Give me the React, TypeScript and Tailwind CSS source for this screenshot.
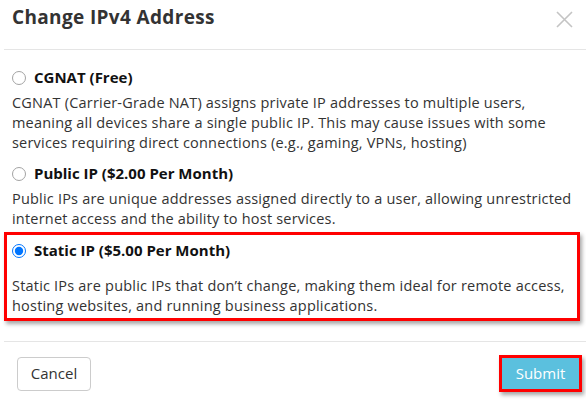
import React from "react";

const body = "font-['Open_Sans',sans-serif]";

function Option({
  label,
  lines,
  checked,
  descMt,
}: {
  label: string;
  lines: string[];
  checked?: boolean;
  descMt: string;
}) {
  return (
    <div>
      <label className="flex items-center h-[25px] gap-[8px]">
        {checked ? (
          <input
            type="radio"
            name="ip"
            defaultChecked
            className="m-0 w-[14px] h-[14px] shrink-0"
          />
        ) : (
          <input
            type="radio"
            name="ip"
            className="m-0 w-[14px] h-[14px] shrink-0 appearance-none rounded-full border border-[#a3a3a3] bg-white"
          />
        )}
        <span className="text-[15px] leading-[25px] font-bold text-[#111]">{label}</span>
      </label>
      <div className={`${descMt} text-[14.5px] tracking-[0.2px] leading-[20px] text-[#333]`}>
        {lines.map((l) => (
          <div key={l} className="whitespace-nowrap">
            {l}
          </div>
        ))}
      </div>
    </div>
  );
}

export default function App() {
  return (
    <div className={`w-[586px] h-[401px] bg-white overflow-hidden ${body}`}>
      <div className="ml-[4px]">
        <div className="h-[50px] border-b border-[#e5e5e5] flex items-start justify-between pl-[8px] pr-[13px]">
          <h1 className="mt-[5px] text-[19px] tracking-[0.35px] leading-[25px] font-bold text-[#333]">
            Change IPv4 Address
          </h1>
          <svg width="17" height="17" viewBox="0 0 17 17" className="mt-[11px]">
            <path d="M1 1 L16 16 M16 1 L1 16" stroke="#c4c4c4" strokeWidth="1.6" fill="none" />
          </svg>
        </div>
        <div className="pl-[8px] pt-[15px]">
          <Option
            label="CGNAT (Free)"
            descMt="mt-[3px]"
            lines={[
              "CGNAT (Carrier-Grade NAT) assigns private IP addresses to multiple users,",
              "meaning all devices share a single public IP. This may cause issues with some",
              "services requiring direct connections (e.g., gaming, VPNs, hosting)",
            ]}
          />
          <div className="mt-[8px]">
            <Option
              label="Public IP ($2.00 Per Month)"
              descMt="mt-[3px]"
              lines={[
                "Public IPs are unique addresses assigned directly to a user, allowing unrestricted",
                "internet access and the ability to host services.",
              ]}
            />
          </div>
        </div>
        <div className="mt-[3px] w-[576px] border-[3px] border-[#ff0000] shadow-[2px_3px_4px_rgba(0,0,0,0.35)] pl-[5px] pt-[3px] pb-[2px]">
          <Option
            label="Static IP ($5.00 Per Month)"
            checked
            descMt="mt-[13px]"
            lines={[
              "Static IPs are public IPs that don’t change, making them ideal for remote access,",
              "hosting websites, and running business applications.",
            ]}
          />
        </div>
        <div className="mt-[20px] border-t border-[#e5e5e5] flex items-center justify-between pl-[13px] pr-[4px] pt-[13px]">
          <button className="w-[74px] h-[34px] border border-[#cccccc] rounded-[4px] bg-white text-[15px] text-[#333]">
            Cancel
          </button>
          <div className="border-[3px] border-[#ff0000] shadow-[2px_3px_4px_rgba(0,0,0,0.35)]">
            <button className="block w-[77px] h-[31px] bg-[#5bc0de] text-white text-[15px]">
              Submit
            </button>
          </div>
        </div>
      </div>
    </div>
  );
}
